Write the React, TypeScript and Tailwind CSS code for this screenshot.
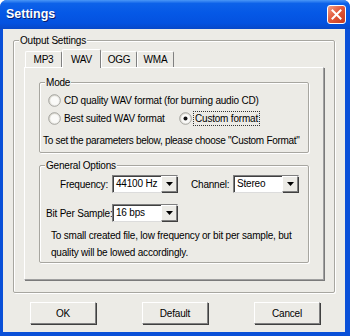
import React from 'react';

const font = { fontFamily: '"Liberation Sans", Arial, sans-serif' };

const Radio = ({ checked, label, focus }: { checked?: boolean; label: string; focus?: boolean }) => (
  <div className="flex items-center h-[13px] whitespace-nowrap">
    <svg width="13" height="13" viewBox="0 0 13 13" className="shrink-0">
      <defs>
        <linearGradient id="rg" x1="0" y1="0" x2="1" y2="1">
          <stop offset="0" stopColor="#d4d2c8" />
          <stop offset="1" stopColor="#ffffff" />
        </linearGradient>
      </defs>
      <circle cx="6.5" cy="6.5" r="5.8" fill="url(#rg)" stroke="#9c9c96" strokeWidth="0.9" />
      <circle cx="6.5" cy="6.5" r="4.2" fill="#fafaf8" />
      {checked && <circle cx="6.5" cy="6.5" r="2" fill="#111" />}
    </svg>
    <span
      className={
        'ml-[2px] px-[1px] leading-[13px] ' +
        (focus ? 'outline outline-1 outline-dotted outline-[#333]' : '')
      }
    >
      {label}
    </span>
  </div>
);

const Combo = ({ value, w }: { value: string; w: string }) => (
  <div className={`${w} h-[18px] flex bg-white border border-t-[#7f7f7f] border-l-[#7f7f7f] border-b-[#dcdcdc] border-r-[#dcdcdc] shadow-[inset_1px_1px_0_#404040]`}>
    <div className="flex-1 pl-[3px] pt-[1px] leading-[14px] whitespace-nowrap overflow-hidden">{value}</div>
    <div className="w-[16px] h-[16px] flex items-center justify-center bg-[#ecebe6] border border-t-white border-l-white border-b-[#808080] border-r-[#808080] shadow-[1px_1px_0_#404040]">
      <svg width="7" height="4" viewBox="0 0 7 4">
        <path d="M0 0h7L3.5 4z" fill="#000" />
      </svg>
    </div>
  </div>
);

const Button = ({ label }: { label: string }) => (
  <div className="w-[66px] h-[22px] flex items-center justify-center bg-[#ecebe6] border border-t-white border-l-white border-b-[#808080] border-r-[#808080] shadow-[1px_1px_0_#404040]">
    {label}
  </div>
);

const Tab = ({ label, active, w }: { label: string; active?: boolean; w: string }) => (
  <div
    className={
      `${w} flex items-center justify-center rounded-t-[2px] border border-b-0 border-t-white border-l-white border-r-[#808080] bg-[#ecebe6] ` +
      (active ? 'h-[19px] -mb-[1px] relative z-10' : 'h-[16px]')
    }
  >
    {label}
  </div>
);

export default function App() {
  return (
    <div
      style={font}
      className="w-[350px] h-[336px] flex flex-col bg-[#0a50d8] text-[10px] tracking-[-0.2px] text-black rounded-t-[7px] overflow-hidden"
    >
      {/* title bar */}
      <div className="h-[29px] shrink-0 flex items-center justify-between pl-[6px] pr-[4px] bg-[linear-gradient(to_bottom,#4a97f7_0%,#0d62e9_12%,#0558e6_45%,#0452e0_80%,#0848c8_100%)]">
        <span className="text-white font-bold text-[12.5px] tracking-normal [text-shadow:1px_1px_0_#0a1e6e]">Settings</span>
        <div className="w-[19px] h-[19px] mb-[1px] rounded-[3px] border border-white flex items-center justify-center bg-[linear-gradient(135deg,#f4a088_0%,#e25a3c_45%,#c73a1d_100%)]">
          <svg width="11" height="11" viewBox="0 0 11 11">
            <path d="M1.5 1.5l8 8M9.5 1.5l-8 8" stroke="#fff" strokeWidth="2" strokeLinecap="square" />
          </svg>
        </div>
      </div>

      {/* body */}
      <div className="flex-1 ml-[3px] mr-[5px] mb-[4px] bg-[#ecebe6] flex flex-col">
        <fieldset className="min-w-0 ml-[10px] mt-[5px] w-[322px] h-[259px] border border-[#a7a6a0] rounded-[2px] shadow-[1px_1px_0_#fff,inset_1px_1px_0_#fff]">
          <legend className="ml-[5px] px-[1px] leading-[13px] bg-[#ecebe6]">Output Settings</legend>
          <div className="pl-[10px] pt-[2px]">
            <div className="flex items-end pl-[1px]">
              <Tab label="MP3" w="w-[37px]" />
              <Tab label="WAV" w="w-[39px]" active />
              <Tab label="OGG" w="w-[36px]" />
              <Tab label="WMA" w="w-[37px]" />
            </div>
            <div className="w-[300px] h-[213px] border border-t-white border-l-white border-r-[#a0a0a0] border-b-[#a0a0a0] shadow-[1px_1px_0_#7a7a7a] pt-[8px] pl-[14px]">
              <fieldset className="min-w-0 w-[270px] border border-[#a7a6a0] rounded-[2px] shadow-[1px_1px_0_#fff,inset_1px_1px_0_#fff]">
                <legend className="ml-[5px] px-[1px] leading-[13px] bg-[#ecebe6]">Mode</legend>
                <div className="pl-[8px] pt-[5px] flex flex-col gap-[5px]">
                  <Radio label="CD quality WAV format (for burning audio CD)" />
                  <div className="flex">
                    <div className="w-[131px]">
                      <Radio label="Best suited WAV format" />
                    </div>
                    <Radio label="Custom format" checked focus />
                  </div>
                </div>
                <div className="pl-[3px] mt-[9px] mb-[5px] leading-[13px] whitespace-nowrap tracking-[-0.3px]">
                  To set the parameters below, please choose "Custom Format"
                </div>
              </fieldset>

              <fieldset className="min-w-0 mt-[6px] w-[270px] border border-[#a7a6a0] rounded-[2px] shadow-[1px_1px_0_#fff,inset_1px_1px_0_#fff]">
                <legend className="ml-[5px] px-[1px] leading-[13px] bg-[#ecebe6]">General Options</legend>
                <div className="pl-[6px] pt-[3px] flex items-center whitespace-nowrap">
                  <span className="w-[62px] text-right">Frequency:</span>
                  <div className="ml-[4px]">
                    <Combo value="44100 Hz" w="w-[66px]" />
                  </div>
                  <span className="ml-[13px] w-[37px]">Channel:</span>
                  <div className="ml-[5px]">
                    <Combo value="Stereo" w="w-[66px]" />
                  </div>
                </div>
                <div className="pl-[6px] mt-[11px] flex items-center whitespace-nowrap">
                  <span className="w-[62px] text-right">Bit Per Sample:</span>
                  <div className="ml-[4px]">
                    <Combo value="16 bps" w="w-[66px]" />
                  </div>
                </div>
                <div className="pl-[11px] mt-[5px] mb-[1px] leading-[17px] whitespace-nowrap">
                  <div>To small created file, low frequency or bit per sample, but</div>
                  <div>quality will be lowed accordingly.</div>
                </div>
              </fieldset>
            </div>
          </div>
        </fieldset>

        <div className="mt-[9px] ml-[27px] flex gap-[46px]">
          <Button label="OK" />
          <Button label="Default" />
          <Button label="Cancel" />
        </div>
      </div>
    </div>
  );
}
